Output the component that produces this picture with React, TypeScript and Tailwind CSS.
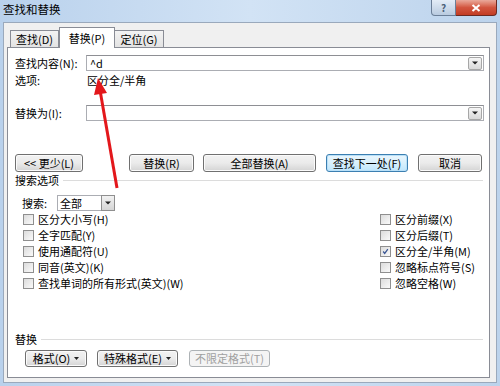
import React from "react";

const FONT = "font-['SimSun','Noto_Sans_CJK_SC','Liberation_Sans',sans-serif]";

function DropBtn() {
  return (
    <div className="w-[14px] h-[13px] border border-[#a7a7a7] rounded-[2px] bg-gradient-to-b from-[#f6f6f6] to-[#d9d9d9] flex items-center justify-center">
      <svg width="6" height="4" viewBox="0 0 6 4">
        <path d="M0 0.5 L6 0.5 L3 3.5 Z" fill="#222" />
      </svg>
    </div>
  );
}

function SmallTri() {
  return (
    <svg className="ml-[4px]" width="5" height="3" viewBox="0 0 5 3">
      <path d="M0 0 L5 0 L2.5 3 Z" fill="#222" />
    </svg>
  );
}

function Btn({
  children,
  className,
  focus,
  disabled,
}: {
  children: React.ReactNode;
  className: string;
  focus?: boolean;
  disabled?: boolean;
}) {
  const border = focus
    ? "border-[#3c7fb1] shadow-[inset_0_0_0_1px_#b9e0f8]"
    : disabled
    ? "border-[#adb2b5]"
    : "border-[#707070] shadow-[inset_0_0_0_1px_#fbfbfb]";
  const bg = focus
    ? "bg-gradient-to-b from-[#eaf6fd] via-[#d9f0fc] to-[#bee6fd]"
    : disabled
    ? "bg-[#f4f4f4]"
    : "bg-gradient-to-b from-[#f2f2f2] via-[#ebebeb] to-[#d4d4d4]";
  return (
    <div
      className={`${className} h-full shrink-0 rounded-[3px] border ${border} ${bg} flex items-center justify-center leading-none text-[11px] ${
        disabled ? "text-[#a0a0a0]" : "text-black"
      }`}
    >
      {children}
    </div>
  );
}

function Check({ label, checked }: { label: string; checked?: boolean }) {
  return (
    <div className="h-[16px] flex items-center">
      <div className="w-[11px] h-[11px] border border-[#8f8f8f] bg-gradient-to-br from-[#dcdcdc] to-[#fafafa] p-[1px] flex items-center justify-center">
        {checked && (
          <svg width="9" height="9" viewBox="0 0 9 9">
            <path d="M1.5 4.5 L3.5 7 L7.5 1.5" stroke="#3a5694" strokeWidth="1.6" fill="none" />
          </svg>
        )}
      </div>
      <span className="ml-[4px] text-[11px] leading-none whitespace-nowrap">{label}</span>
    </div>
  );
}

export default function App() {
  return (
    <div
      className={`${FONT} relative w-[500px] h-[386px] overflow-hidden flex flex-col text-black bg-gradient-to-r from-[#b9d1ec] via-[#d2e3f5] to-[#bcd3ec]`}
    >
      {/* title bar */}
      <div className="h-[22px] shrink-0 flex items-start justify-between">
        <span className="pl-[3px] pt-[4px] text-[11.5px] leading-none">查找和替换</span>
        <div className="flex mr-[3px]">
          <div className="w-[25px] h-[16px] rounded-bl-[4px] border border-[#6b7f98] border-t-0 bg-gradient-to-b from-[#e3ecf6] to-[#b9cbe0] flex items-center justify-center text-[10px] font-bold text-[#4b5f78] leading-none">
            ?
          </div>
          <div className="w-[41px] h-[16px] rounded-br-[4px] border border-[#6b2a22] border-t-0 border-l-0 bg-gradient-to-b from-[#e9a99b] via-[#d2553f] to-[#c23c23] flex items-center justify-center">
            <svg width="10" height="8" viewBox="0 0 10 8">
              <path d="M1.5 1 L8.5 7 M8.5 1 L1.5 7" stroke="#fff" strokeWidth="2" />
            </svg>
          </div>
        </div>
      </div>

      {/* dialog body */}
      <div className="mx-[3px] mb-[3px] flex-1 bg-[#f0f0f0] border border-[#9aa9bc] flex flex-col pb-[4px]">
        {/* tabs */}
        <div className="mt-[4px] h-[20px] flex items-end pl-[6px] relative z-10">
          <div className="w-[49px] h-[17px] border border-[#898c95] border-b-0 bg-gradient-to-b from-[#f3f3f3] to-[#e3e3e3] flex items-center justify-center text-[11px] leading-none">
            查找(D)
          </div>
          <div className="w-[56px] h-[21px] -mb-[1px] border border-[#898c95] border-b-0 bg-white flex items-center justify-center text-[11px] leading-none">
            替换(P)
          </div>
          <div className="w-[49px] h-[17px] border border-[#898c95] border-b-0 border-l-0 bg-gradient-to-b from-[#f3f3f3] to-[#e3e3e3] flex items-center justify-center text-[11px] leading-none">
            定位(G)
          </div>
        </div>

        {/* panel */}
        <div className="ml-[3px] w-[483px] h-[331px] bg-white border border-[#898c95] flex flex-col text-[11px] leading-none">
          {/* find */}
          <div className="mt-[7px] h-[16px] flex items-center pl-[7px]">
            <span className="w-[71px] whitespace-nowrap">查找内容(N):</span>
            <div className="w-[398px] h-[16px] bg-white border border-[#abadb3] border-t-[#8e8f94] flex items-center justify-between pl-[3px] pr-[1px]">
              <span>^d</span>
              <DropBtn />
            </div>
          </div>
          {/* options */}
          <div className="mt-[2px] h-[14px] flex items-center pl-[7px]">
            <span className="w-[72px]">选项:</span>
            <span>区分全/半角</span>
          </div>
          {/* replace */}
          <div className="mt-[18px] h-[16px] flex items-center pl-[7px]">
            <span className="w-[71px] whitespace-nowrap">替换为(I):</span>
            <div className="w-[398px] h-[16px] bg-white border border-[#abadb3] border-t-[#8e8f94] flex items-center justify-end pr-[1px]">
              <DropBtn />
            </div>
          </div>
          {/* buttons */}
          <div className="mt-[33px] h-[18px] flex pl-[7px]">
            <Btn className="w-[68px]">&lt;&lt; 更少(L)</Btn>
            <Btn className="w-[65px] ml-[46px]">替换(R)</Btn>
            <Btn className="w-[113px] ml-[9px]">全部替换(A)</Btn>
            <Btn className="w-[82px] ml-[10px]" focus>
              查找下一处(F)
            </Btn>
            <Btn className="w-[64px] ml-[10px]">取消</Btn>
          </div>
          {/* search options header */}
          <div className="mt-[1px] h-[14px] flex items-center pl-[7px] pr-[6px]">
            <span className="whitespace-nowrap">搜索选项</span>
            <div className="flex-1 ml-[4px] h-0 border-t border-[#dcdcdc]" />
          </div>
          {/* search select */}
          <div className="mt-[8px] h-[16px] flex items-center pl-[14px]">
            <span className="w-[35px] whitespace-nowrap">搜索:</span>
            <div className="w-[58px] h-[16px] flex">
              <div className="flex-1 border border-[#abadb3] border-r-0 bg-white flex items-center pl-[2px]">全部</div>
              <div className="w-[14px] h-[16px] border border-[#8f8f8f] bg-gradient-to-b from-[#f2f2f2] to-[#d5d5d5] flex items-center justify-center">
                <svg width="6" height="4" viewBox="0 0 6 4">
                  <path d="M0 0.5 L6 0.5 L3 3.5 Z" fill="#222" />
                </svg>
              </div>
            </div>
          </div>
          {/* checkboxes */}
          <div className="flex">
            <div className="w-[372px] pl-[15px] flex flex-col">
              <Check label="区分大小写(H)" />
              <Check label="全字匹配(Y)" />
              <Check label="使用通配符(U)" />
              <Check label="同音(英文)(K)" />
              <Check label="查找单词的所有形式(英文)(W)" />
            </div>
            <div className="flex flex-col">
              <Check label="区分前缀(X)" />
              <Check label="区分后缀(T)" />
              <Check label="区分全/半角(M)" checked />
              <Check label="忽略标点符号(S)" />
              <Check label="忽略空格(W)" />
            </div>
          </div>
          {/* replace section */}
          <div className="mt-[41px] h-[14px] flex items-center pl-[7px] pr-[6px]">
            <span className="whitespace-nowrap">替换</span>
            <div className="flex-1 ml-[4px] h-0 border-t border-[#dcdcdc]" />
          </div>
          <div className="mt-[4px] h-[17px] flex pl-[17px]">
            <Btn className="w-[62px]">
              格式(O)
              <SmallTri />
            </Btn>
            <Btn className="w-[81px] ml-[10px]">
              特殊格式(E)
              <SmallTri />
            </Btn>
            <Btn className="w-[81px] ml-[11px]" disabled>
              不限定格式(T)
            </Btn>
          </div>
        </div>
      </div>

      {/* red annotation arrow */}
      <svg className="absolute left-0 top-0 pointer-events-none" width="500" height="386" viewBox="0 0 500 386">
        <line x1="117" y1="188" x2="100.5" y2="93" stroke="#e3171b" strokeWidth="3" />
        <polygon points="98,78 107,93 94,95" fill="#e3171b" />
      </svg>
    </div>
  );
}
